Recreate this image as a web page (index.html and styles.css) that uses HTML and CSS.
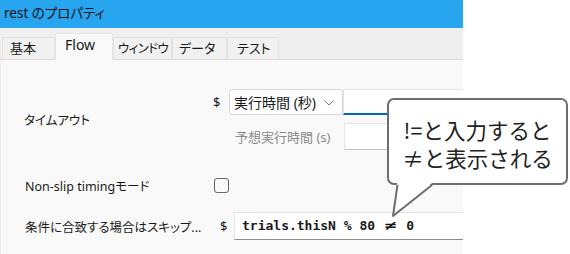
FILE: index.html
```html
<!DOCTYPE html>
<html lang="ja">
<head>
  <meta charset="UTF-8" />
  <title>rest のプロパティ</title>
  <link rel="stylesheet" href="styles.css">
</head>
<body>
  <div class="window">
    <div class="titlebar">rest のプロパティ</div>
    <div class="tabs">
      <div class="tab tab-kihon">基本</div>
      <div class="tab tab-flow active">Flow</div>
      <div class="tab tab-window">ウィンドウ</div>
      <div class="tab tab-data">データ</div>
      <div class="tab tab-test">テスト</div>
    </div>
    <div class="panel">
      <div class="row row-timeout">
        <div class="label">タイムアウト</div>
        <div class="dollar">$</div>
        <div class="controls">
          <div class="line">
            <div class="select">
              <span>実行時間 (秒)</span>
              <svg class="chevron" width="10" height="6" viewBox="0 0 10 6"><path d="M0.5 0.5 L5 5 L9.5 0.5" fill="none" stroke="#777" stroke-width="1"/></svg>
            </div>
            <div class="input input-active"></div>
          </div>
          <div class="line">
            <div class="hint">予想実行時間 (s)</div>
            <div class="input input-hint"></div>
          </div>
        </div>
      </div>
      <div class="row row-nonslip">
        <div class="label">Non-slip timingモード</div>
        <div class="checkbox"></div>
      </div>
      <div class="row row-skip">
        <div class="label label-skip">条件に合致する場合はスキップ...</div>
        <div class="dollar">$</div>
        <div class="input input-code">trials.thisN % 80 <span class="neq">≠</span> 0</div>
      </div>
    </div>
  </div>

  <div class="callout">
    <div class="callout-line">!=と入力すると</div>
    <div class="callout-line">≠と表示される</div>
  </div>
  <svg class="callout-tail" width="50" height="40" viewBox="0 0 50 40">
    <polygon points="9,2 44,2 5,35" fill="#fff"/>
    <path d="M9.5 4 L5 35 L44 4" fill="none" stroke="#6e6e6e" stroke-width="2" stroke-linejoin="round"/>
  </svg>
</body>
</html>
```

FILE: styles.css
```css
body {
  margin: 0;
  background: #fff;
  font-family: "Noto Sans", "Noto Sans CJK JP", sans-serif;
  font-feature-settings: "palt";
  color: #1a1a1a;
  width: 570px;
  height: 254px;
  overflow: hidden;
  position: relative;
}

.window {
  width: 463px;
  height: 254px;
  display: flex;
  flex-direction: column;
  background: #f9f9f9;
}

.titlebar {
  height: 28px;
  background: #27a5ef;
  font-size: 13.5px;
  line-height: 27px;
  padding-left: 4px;
  color: #111;
}

.tabs {
  height: 31px;
  background: #efefef;
  border-bottom: 1px solid #dcdcdc;
  display: flex;
  align-items: flex-end;
  padding-left: 2px;
}

.tab {
  height: 22px;
  box-sizing: border-box;
  border: 1px solid #e2e2e2;
  border-bottom: none;
  background: #f1f1f1;
  font-size: 13px;
  line-height: 21px;
  padding-left: 7px;
  white-space: nowrap;
  overflow: hidden;
}

.tab.active {
  background: #f9f9f9;
  border-color: #e6e6e6;
  font-size: 14px;
  line-height: 22px;
  padding-left: 9px;
  margin-bottom: -1px;
  height: 27px;
}

.tab-kihon { width: 53px; }
.tab-flow { width: 58px; }
.tab-window { width: 59px; padding-left: 4px; font-size: 12.5px; letter-spacing: -0.6px; }
.tab-data { width: 55px; padding-left: 6px; }
.tab-test { width: 52px; padding-left: 9px; }

.panel {
  flex: 1;
  padding-top: 29px;
  padding-left: 24px;
  border-left: 1px solid #ececec;
}

.row {
  display: flex;
  align-items: center;
  font-size: 12.5px;
}

.label {
  width: 189px;
  flex-shrink: 0;
}

.dollar {
  width: 16px;
  font-size: 13px;
}

.row-timeout {
  align-items: flex-start;
}

.row-timeout .label {
  padding-top: 21px;
  margin-left: -1px;
}

.row-timeout .dollar {
  line-height: 26px;
}

.controls {
  flex: 1;
  display: flex;
  flex-direction: column;
  gap: 8px;
}

.line {
  display: flex;
  align-items: center;
}

.select {
  width: 114px;
  height: 26px;
  box-sizing: border-box;
  background: #fff;
  border: 1px solid #d6d6d6;
  border-radius: 3px;
  display: flex;
  align-items: center;
  justify-content: space-between;
  padding: 0 8px 0 4px;
  font-size: 14px;
}

.chevron {
  margin-top: 1px;
}

.input {
  flex: 1;
  background: #fff;
  box-sizing: border-box;
  border: 1px solid #e4e4e4;
  border-right: none;
}

.input-active {
  height: 26px;
  border-bottom: 2px solid #0067c0;
}

.hint {
  width: 109px;
  padding-left: 6px;
  color: #8a8a8a;
  font-size: 13px;
}

.input-hint {
  height: 27px;
  border-bottom-color: #c4c4c4;
}

.row-nonslip {
  margin-top: 25px;
  height: 20px;
}

.checkbox {
  width: 15px;
  height: 15px;
  box-sizing: border-box;
  border: 1px solid #666;
  border-radius: 3px;
  background: #f9f9f9;
}

.row-skip {
  margin-top: 17px;
}

.label-skip {
  width: 195px;
}

.row-skip .dollar {
  width: 14px;
}

.input-code {
  height: 28px;
  border-bottom: 1px solid #8c8c8c;
  font-family: "DejaVu Sans Mono", monospace;
  font-weight: bold;
  font-size: 13px;
  line-height: 26px;
  padding-left: 7px;
  color: #1a1a1a;
}

.neq {
  display: inline-block;
  width: 2ch;
  text-align: center;
  transform: scaleX(1.5);
}

.callout {
  position: absolute;
  left: 387px;
  top: 98px;
  width: 181px;
  height: 87px;
  box-sizing: border-box;
  border: 2px solid #6e6e6e;
  border-radius: 7px;
  background: #fff;
  text-align: center;
  font-family: "Noto Sans CJK JP", sans-serif;
  font-feature-settings: normal;
  font-size: 21.5px;
  padding-top: 16px;
  color: #222;
}

.callout-line {
  height: 28px;
  line-height: 28px;
}

.callout-tail {
  position: absolute;
  left: 388px;
  top: 181px;
}
```
